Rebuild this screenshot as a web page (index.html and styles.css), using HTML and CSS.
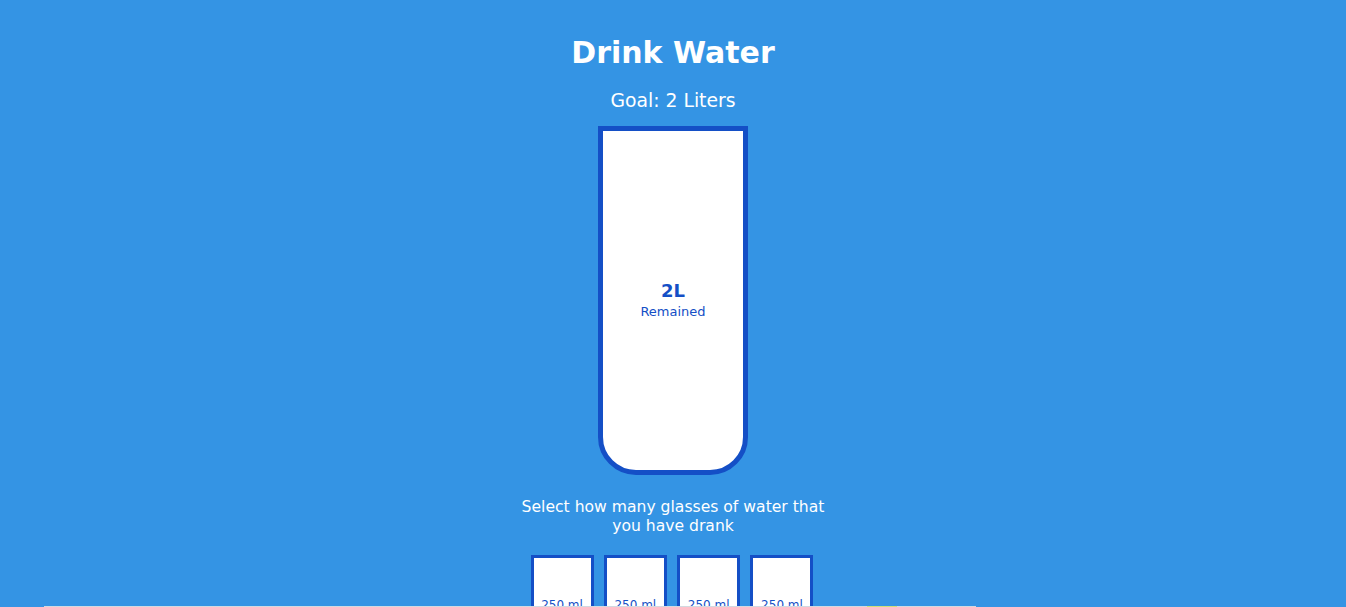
FILE: index.html
```html
<!DOCTYPE html>
<html lang="en">
<head>
<meta charset="UTF-8">
<title>Drink Water</title>
<link rel="stylesheet" href="styles.css">
</head>
<body>
  <h1 class="title">Drink Water</h1>
  <h3 class="goal">Goal: 2 Liters</h3>
  <div class="cup">
    <div class="remained">
      <span class="liters">2L</span>
      <small class="remained-label">Remained</small>
    </div>
  </div>
  <p class="text">Select how many glasses of water that you have drank</p>
  <div class="cups">
    <div class="cup-small">250 ml</div>
    <div class="cup-small">250 ml</div>
    <div class="cup-small">250 ml</div>
    <div class="cup-small">250 ml</div>
    <div class="cup-small">250 ml</div>
    <div class="cup-small">250 ml</div>
    <div class="cup-small">250 ml</div>
    <div class="cup-small">250 ml</div>
  </div>
  <div class="edge"><span class="edge-mark"></span></div>
</body>
</html>
```

FILE: styles.css
```css
* { box-sizing: border-box; }

html, body { height: 100%; }

body {
  margin: 0;
  background: #3494e4;
  color: #fff;
  font-family: "DejaVu Sans", "Noto Sans", sans-serif;
  display: flex;
  flex-direction: column;
  align-items: center;
  overflow: hidden;
}

body > * { flex-shrink: 0; }

.title {
  margin: 35px 0 0;
  font-size: 30px;
  line-height: 36px;
  font-weight: 700;
}

.goal {
  margin: 18px 0 0;
  font-size: 18.8px;
  line-height: 24px;
  font-weight: 400;
}

.cup {
  margin-top: 13px;
  width: 150px;
  height: 349px;
  border: 5px solid #144fc6;
  border-radius: 0 0 38px 38px;
  background: #fff;
  display: flex;
  flex-direction: column;
  justify-content: center;
  align-items: center;
  color: #144fc6;
}

.remained {
  display: flex;
  flex-direction: column;
  align-items: center;
}

.liters {
  font-size: 18px;
  line-height: 22px;
  font-weight: 700;
}

.remained-label {
  font-size: 13px;
  line-height: 18px;
  margin-top: 1px;
}

.text {
  margin: 23px 0 0;
  width: 330px;
  text-align: center;
  font-size: 15.6px;
  line-height: 19px;
}

.cups {
  margin: 19px 2px 0 0;
  width: 283px;
  display: flex;
  flex-wrap: wrap;
  justify-content: space-between;
  row-gap: 10px;
}

.cup-small {
  width: 63px;
  height: 100px;
  border: 3px solid #144fc6;
  background: #fff;
  color: #144fc6;
  display: flex;
  align-items: center;
  justify-content: center;
  font-size: 12px;
}

.edge {
  position: fixed;
  left: 44px;
  bottom: 0;
  width: 932px;
  height: 1px;
  background: #d3d9e0;
}

.edge-mark {
  position: absolute;
  left: 823px;
  top: 0;
  width: 30px;
  height: 1px;
  background: #cfe07a;
}
```
